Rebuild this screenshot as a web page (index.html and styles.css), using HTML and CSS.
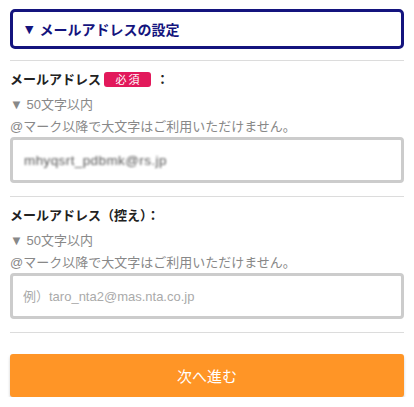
FILE: index.html
```html
<!DOCTYPE html>
<html lang="ja">
<head>
<meta charset="utf-8">
<link rel="stylesheet" href="styles.css">
</head>
<body>
<div class="page">
  <h2 class="section-title"><span class="tri">▼</span>メールアドレスの設定</h2>

  <div class="field-group">
    <div class="label-row">
      <span class="label">メールアドレス</span>
      <span class="badge">必須</span>
      <span class="colon">：</span>
    </div>
    <div class="hints">
      <div>▼ 50文字以内</div>
      <div>@マーク以降で大文字はご利用いただけません。</div>
    </div>
    <div class="field"><span class="masked">mhyqsrt_pdbmk@rs.jp</span></div>
  </div>

  <div class="field-group">
    <div class="label-row">
      <span class="label">メールアドレス（控え）：</span>
    </div>
    <div class="hints">
      <div>▼ 50文字以内</div>
      <div>@マーク以降で大文字はご利用いただけません。</div>
    </div>
    <input class="field input" type="text" placeholder="例）taro_nta2@mas.nta.co.jp">
  </div>

  <div class="actions">
    <button class="next-btn" type="button">次へ進む</button>
  </div>
</div>
</body>
</html>
```

FILE: styles.css
```css
* { box-sizing: border-box; }
html, body { margin: 0; padding: 0; background: #fff; }
body {
  font-family: "Liberation Sans", "Noto Sans CJK JP", sans-serif;
  color: #222;
}
.page {
  padding: 9px 10px 0;
}
.section-title {
  margin: 0 0 11px;
  height: 40px;
  border: 3px solid #14147e;
  border-radius: 5px;
  padding-left: 12px;
  display: flex;
  align-items: center;
  font-family: "Noto Sans CJK JP", sans-serif;
  font-size: 14px;
  font-weight: bold;
  color: #14147e;
}
.tri {
  font-family: "DejaVu Sans", sans-serif;
  font-size: 11px;
  margin-right: 6px;
}
.field-group {
  border-top: 1px solid #dcdcdc;
  padding: 7px 0 13px;
}
.label-row {
  height: 20px;
  display: flex;
  align-items: center;
  font-family: "Noto Sans CJK JP", sans-serif;
  font-size: 13px;
  font-weight: bold;
  color: #222;
}
.badge {
  margin-left: 3px;
  width: 47px;
  height: 15px;
  border-radius: 3px;
  background: #e2195b;
  color: #fff;
  font-size: 11px;
  font-weight: normal;
  letter-spacing: 2px;
  padding-left: 2px;
  display: flex;
  align-items: center;
  justify-content: center;
  margin-top: 2px;
}
.colon { margin-left: 5px; }
.hints {
  margin-top: 6px;
  font-size: 13px;
  line-height: 22px;
  color: #888;
}
.hints div:first-child { margin-bottom: 0; }
.field {
  display: flex;
  align-items: center;
  width: 100%;
  height: 46px;
  border: 3px solid #cccccc;
  border-radius: 4px;
  padding: 0 10px;
  font-family: "Liberation Sans", "Noto Sans CJK JP", sans-serif;
  font-size: 13px;
  background: #fff;
  outline: none;
  margin: -1px 0 0;
}
.masked {
  color: #555;
  filter: blur(1.3px);
  font-size: 13.5px;
  letter-spacing: 0.4px;
  padding-left: 1px;
}
.input { color: #333; }
.input::placeholder { color: #aaa; }
.actions {
  border-top: 1px solid #dcdcdc;
  padding-top: 21px;
}
.next-btn {
  display: block;
  width: 100%;
  height: 43px;
  border: none;
  border-radius: 3px;
  background: #ff9526;
  color: #fff;
  font-family: "Noto Sans CJK JP", sans-serif;
  font-size: 15px;
  box-shadow: 0 2px 3px rgba(0, 0, 0, 0.2);
  cursor: pointer;
}
```
